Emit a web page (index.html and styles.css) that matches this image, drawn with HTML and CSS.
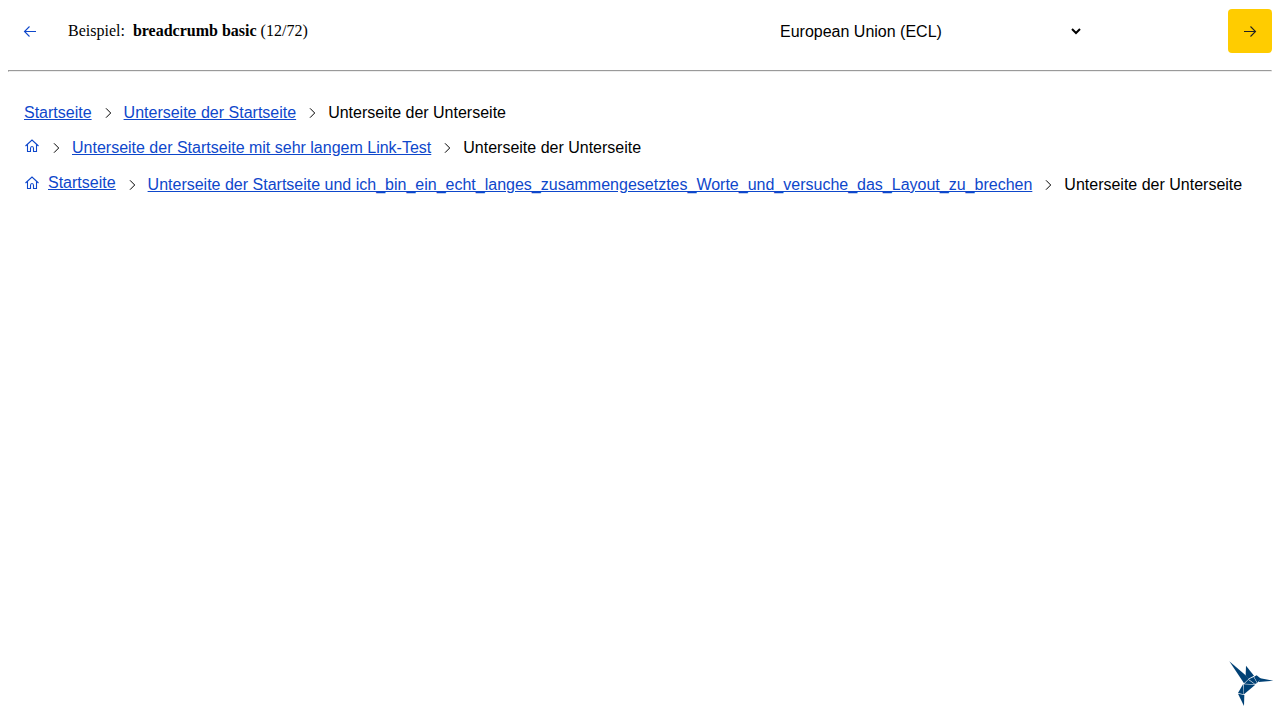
FILE: index.html
```html
<!DOCTYPE html>
<html lang="de">
<head>
<meta charset="utf-8">
<title>breadcrumb basic</title>
<link rel="stylesheet" href="styles.css">
</head>
<body>
<svg class="sprite" aria-hidden="true">
  <symbol id="chevron" viewBox="0 0 16 16"><path d="M6 3.300L10.700 8L6 12.700"/></symbol>
  <symbol id="home" viewBox="0 0 16 16"><path d="M1.5 7L8 1L14.5 7M3.500 5.500V12.500H6.500V9.500Q6.500 7.500 8 7.500Q9.500 7.500 9.500 9.500V12.500H12.500V5.500"/></symbol>
</svg>
<header class="toolbar">
  <button class="nav-button" type="button" aria-label="Zurück">
    <svg class="icon" viewBox="0 0 16 16"><path d="M14 8.500H2.500M7.500 3.500L2.500 8.500L7.500 13.500"/></svg>
  </button>
  <div class="example">Beispiel: <strong class="example-name">breadcrumb basic</strong> (12/72)</div>
  <select class="theme-select" aria-label="Theme">
    <option>European Union (ECL)</option>
  </select>
  <button class="nav-button nav-button-primary" type="button" aria-label="Weiter">
    <svg class="icon" viewBox="0 0 16 16"><path d="M2 8.500H13.500M8.500 3.500L13.500 8.500L8.500 13.500"/></svg>
  </button>
</header>
<hr class="divider">
<main class="content">
  <nav aria-label="Breadcrumb 1">
    <ul class="breadcrumb">
      <li><a class="link" href="#">Startseite</a></li>
      <li class="crumb"><svg class="icon icon-thin"><use href="#chevron"/></svg><a class="link" href="#">Unterseite der Startseite</a></li>
      <li class="crumb"><svg class="icon icon-thin"><use href="#chevron"/></svg><span>Unterseite der Unterseite</span></li>
    </ul>
  </nav>
  <nav aria-label="Breadcrumb 2">
    <ul class="breadcrumb">
      <li class="crumb-home"><a class="link home-link" href="#" aria-label="Startseite"><svg class="icon"><use href="#home"/></svg></a></li>
      <li class="crumb"><svg class="icon icon-thin"><use href="#chevron"/></svg><a class="link" href="#">Unterseite der Startseite mit sehr langem Link-Test</a></li>
      <li class="crumb"><svg class="icon icon-thin"><use href="#chevron"/></svg><span>Unterseite der Unterseite</span></li>
    </ul>
  </nav>
  <nav aria-label="Breadcrumb 3">
    <ul class="breadcrumb">
      <li class="crumb-home"><a class="link home-link" href="#"><svg class="icon"><use href="#home"/></svg><span class="home-label">Startseite</span></a></li>
      <li class="crumb"><svg class="icon icon-thin"><use href="#chevron"/></svg><a class="link" href="#">Unterseite der Startseite und ich_bin_ein_echt_langes_zusammengesetztes_Worte_und_versuche_das_Layout_zu_brechen</a></li>
      <li class="crumb"><svg class="icon icon-thin"><use href="#chevron"/></svg><span>Unterseite der Unterseite</span></li>
    </ul>
  </nav>
</main>
<svg class="bird" viewBox="0 0 168 168" role="img" aria-label="KoliBri">
  <path d="M22 19L76 65L80 72L66 85Z"/>
  <path d="M72 32L96 62L79 71L71 61Z"/>
  <path d="M80 73L95 66L105 84L99 87Z"/>
  <path d="M67 86L79 74L98 88Z"/>
  <path d="M96 65L104 61L117 71L106 83Z"/>
  <path d="M115 70L154 77L110 81Z"/>
  <path d="M66 88L100 89L66 118Z"/>
  <path d="M64 86L65 118L48 114Z"/>
  <path d="M48 116L67 120L66 153Z"/>
</svg>
</body>
</html>
```
FILE: styles.css
```css
body {
  margin: 8px;
  background: #fff;
  color: #000;
  font: 16px/18px "Liberation Serif", serif;
}

.sprite {
  position: absolute;
  width: 0;
  height: 0;
}

.icon {
  display: block;
  flex: none;
  width: 16px;
  height: 16px;
  fill: none;
  stroke: currentColor;
  stroke-width: 1.1;
}

.icon-thin {
  stroke-width: 1;
}

.toolbar {
  display: grid;
  grid-template-columns: 44px minmax(0, 1fr) 308px 144px 44px;
  align-items: center;
  padding-top: 1px;
}

.nav-button {
  display: flex;
  align-items: center;
  justify-content: center;
  width: 44px;
  height: 44px;
  padding: 0;
  border: 0;
  border-radius: 4px;
  background: transparent;
  color: #0e47cb;
}

.nav-button-primary {
  grid-column: 5;
  background: #ffcc00;
  color: #222;
}

.example {
  padding-left: 16px;
}

.example-name {
  margin-left: 4px;
}

.theme-select {
  width: 100%;
  height: 44px;
  padding: 0;
  border: 0;
  background: #fff;
  color: #000;
  font: 16px "Liberation Sans", Arial, sans-serif;
}

.divider {
  margin: 17px 0 0;
}

.content {
  display: flex;
  flex-direction: column;
  gap: 17px;
  padding: 32px 16px;
  font-family: "Liberation Sans", Arial, sans-serif;
}

.breadcrumb {
  display: flex;
  align-items: flex-end;
  margin: 0;
  padding: 0;
  list-style: none;
  white-space: nowrap;
}

.crumb {
  display: flex;
  align-items: center;
  gap: 8px;
  padding-left: 8px;
}

.link {
  color: #0e47cb;
}

.home-link {
  display: flex;
  align-items: flex-end;
  gap: 8px;
}

.crumb-home {
  padding-bottom: 2px;
}

.home-label {
  text-decoration: underline;
}

.bird {
  position: fixed;
  right: 2px;
  bottom: 9px;
  width: 56px;
  height: 56px;
  fill: #004175;
}
```
